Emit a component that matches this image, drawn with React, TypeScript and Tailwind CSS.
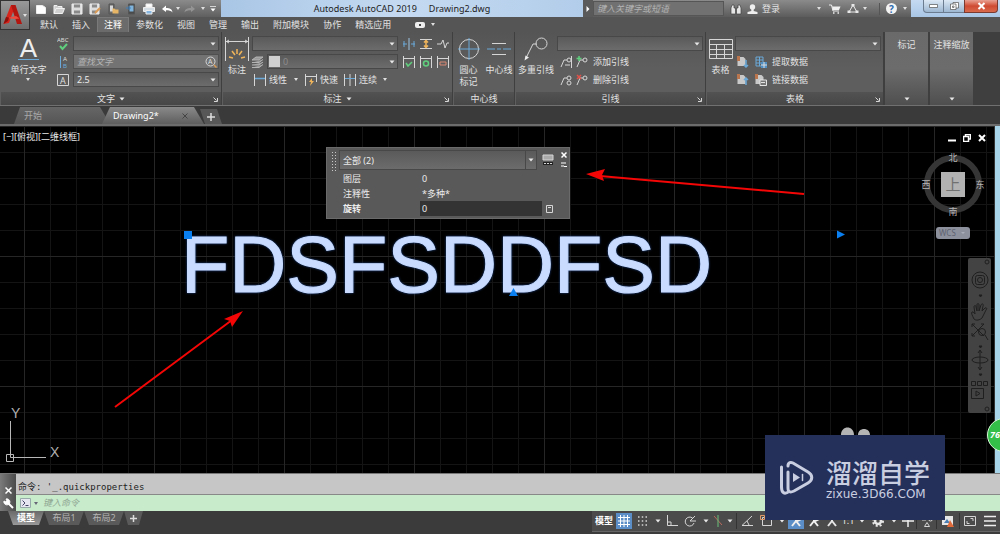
import type { ReactNode } from "react"

interface IcoProps {
  w?: number
  h?: number
  box?: string
  className?: string
  children: ReactNode
}

const Ico = ({ w = 12, h = 12, box, className = "", children }: IcoProps) => (
  <svg
    width={w}
    height={h}
    viewBox={box ?? `0 0 ${w} ${h}`}
    fill="none"
    stroke="#d6d6d6"
    className={`shrink-0 ${className}`}
    aria-hidden="true"
  >
    {children}
  </svg>
)

const Caret = ({ className = "" }: { className?: string }) => (
  <Ico w={6} h={4} className={className}>
    <path d="M0.5 0.5h5L3 3.5z" fill="#e8e8e8" stroke="none" />
  </Ico>
)

const SmallCaret = () => (
  <Ico w={4} h={3}>
    <path d="M0 0h4L2 3z" fill="#e0e0e0" stroke="none" />
  </Ico>
)

const Launcher = () => (
  <button aria-label="对话框" className="absolute right-[3px] top-[5px]">
    <Ico w={5} h={5}>
      <path d="M0.5 0.5l3 3M4.5 1v3.5H1" />
    </Ico>
  </button>
)

// Flat drop-down with its own arrow
const Drop = ({
  label,
  value = "",
  className = "h-[15px]",
}: {
  label: string
  value?: string
  className?: string
}) => (
  <div className={`relative ${className}`}>
    <select
      aria-label={label}
      className="block h-full w-full appearance-none border border-[#484848] bg-linear-to-b from-[#5a5a5a] to-[#6c6c6c] pl-[3px] text-[9px] leading-[13px] text-[#ececec] outline-none"
    >
      <option>{value}</option>
    </select>
    <span className="pointer-events-none absolute inset-y-0 right-[3px] flex items-center">
      <Caret />
    </span>
  </div>
)

const BigButton = ({ icon, children, className = "" }: { icon: ReactNode; children: ReactNode; className?: string }) => (
  <button className={`flex shrink-0 flex-col items-center gap-[3px] pt-[5px] leading-[12px] ${className}`}>
    <span className="flex h-6 items-center">{icon}</span>
    <span>{children}</span>
  </button>
)

const Panel = ({
  title,
  arrow,
  launcher,
  className = "",
  children,
}: {
  title: string
  arrow?: boolean
  launcher?: boolean
  className?: string
  children: ReactNode
}) => (
  <section
    className={`flex shrink-0 flex-col border-r border-[#3f3f3f] bg-linear-to-b from-[#555] via-[#5e5e5e] to-[#5e5e5e] ${className}`}
  >
    <div className="flex h-[60px]">{children}</div>
    <h2 className="relative flex h-[13px] items-center justify-center gap-1 border-l border-[#5e5e5e] bg-linear-to-b from-[#525252] to-[#474747] leading-none">
      {title}
      {arrow && <Caret />}
      {launcher && <Launcher />}
    </h2>
  </section>
)

const SidePanel = ({ title }: { title: string }) => (
  <button className="mr-[2px] flex w-[43px] shrink-0 flex-col items-center justify-between bg-linear-to-b from-[#6a6a6a] via-[#6c6c6c] to-[#4f4f4f] pb-1 pt-[6px] leading-[14px]">
    {title}
    <Caret />
  </button>
)

const quickIcons = [
  {
    name: "新建",
    icon: <path d="M1.5 2.5h6l3 2v6h-9z" fill="#fff" stroke="#eee" />,
  },
  {
    name: "打开",
    icon: <path d="M1 10.5v-8h3l1 1h4v2M1 10.5l2-5h8.500l-2 5z" fill="#d0d0d0" stroke="#f2f2f2" />,
  },
  {
    name: "保存",
    icon: (
      <>
        <path d="M1 1h10v10H1z" fill="#ddd" stroke="#eee" />
        <path d="M3 1.500h6v3H3zM3 7.500h6v3H3z" fill="#8a8a8a" stroke="none" />
      </>
    ),
  },
  {
    name: "另存为",
    icon: (
      <>
        <path d="M1 1h9v10H1z" fill="#ddd" stroke="#eee" />
        <path d="M3 1.500h5v3H3zM3 7.500h4v3H3z" fill="#8a8a8a" stroke="none" />
        <path d="M6 10l5-5" stroke="#d99a55" strokeWidth="2" />
      </>
    ),
  },
  {
    name: "从 Web 打开",
    icon: (
      <>
        <path d="M2 1h5v10H2z" fill="#6b6b6b" stroke="#555" />
        <path d="M3 2.500h3v6H3z" fill="#d8d8d8" stroke="none" />
        <path d="M5.500 10.500v-5h2l1 1h3v4z" fill="#e6b566" stroke="none" />
      </>
    ),
  },
  {
    name: "保存到 Web",
    icon: (
      <>
        <path d="M3.500 1h6v10h-6z" fill="#4a4a4a" stroke="#555" />
        <path d="M4.500 2.500h4v6h-4z" fill="#7fb4dd" stroke="none" />
        <path d="M1 5h4M3.500 3.500L5.500 5l-2 1.500" stroke="#3f7fb8" />
      </>
    ),
  },
  {
    name: "打印",
    icon: (
      <>
        <path d="M3 1h6v3H3z" fill="#fff" stroke="#eee" />
        <path d="M0.500 4.500h11v4H0.500z" fill="#d4dce4" stroke="#eee" />
        <path d="M3 7.500h6v3.500H3z" fill="#86b6e0" stroke="#eee" />
      </>
    ),
  },
  {
    name: "放弃",
    icon: <path d="M1 6l4-3.500V5c4 0 6 1 6.500 4.500C10 7.500 8 7.200 5 7.200V9z" fill="#fff" stroke="none" />,
  },
]

const TitleBar = () => (
  <div className="flex h-[17px]">
    <div className="flex w-[191px] shrink-0 items-center bg-linear-to-b from-[#8b8b8b] to-[#5f5f5f] pl-[2px]">
      {quickIcons.map((q) => (
        <button key={q.name} aria-label={q.name} className="flex w-[18px] justify-center">
          <Ico>{q.icon}</Ico>
        </button>
      ))}
      <button aria-label="放弃列表" className="w-2">
        <SmallCaret />
      </button>
      <button aria-label="重做" className="w-[14px]">
        <Ico>
          <path d="M11 6L7 2.500V5C3 5 1 6 0.500 9.500 2 7.500 4 7.200 7 7.200V9z" fill="#949494" stroke="none" />
        </Ico>
      </button>
      <button aria-label="重做列表" className="w-[10px] pl-[3px]">
        <SmallCaret />
      </button>
      <button aria-label="自定义快速访问工具栏" className="pl-[2px]">
        <Ico w={6} h={6}>
          <path d="M0 0.500h6" />
          <path d="M0.500 2.500h5L3 5.500z" fill="#fff" stroke="none" />
        </Ico>
      </button>
    </div>

    <h1 className="flex min-w-0 flex-1 items-center justify-center gap-3 whitespace-nowrap bg-linear-to-r from-[#a9c6e6] via-[#c5daf1] to-[#b2cdea] font-['Noto_Sans',sans-serif] text-[9px] leading-none text-[#222]">
      <span>Autodesk AutoCAD 2019</span>
      <span>Drawing2.dwg</span>
    </h1>

    <div className="flex w-[328px] shrink-0 items-center bg-linear-to-b from-[#8b8b8b] to-[#5c5c5c] text-[#e4e4e4]">
      <button aria-label="展开搜索" className="flex h-full w-[10px] items-center justify-center bg-[#5a5a5a]">
        <Ico w={4} h={6}>
          <path d="M0.500 0l3 3-3 3z" fill="#fff" stroke="none" />
        </Ico>
      </button>
      <input
        aria-label="搜索"
        placeholder="键入关键字或短语"
        className="h-[15px] w-[131px] border border-[#565656] bg-[#717171] pl-[3px] text-[9px] italic outline-none placeholder:text-[#b4b4b4]"
      />
      <button aria-label="查找" className="ml-[3px] flex w-[18px] justify-center">
        <Ico>
          <path d="M2 2h2v3h1.500v6H1V5zM10 2H8v3H6.500v6H11V5z" fill="#e6e6e6" stroke="#444" strokeWidth="0.700" />
        </Ico>
      </button>
      <button className="flex items-center gap-1 pl-[2px] text-[9px] leading-none">
        <Ico w={11}>
          <circle cx="5.500" cy="4" r="2.700" fill="#eee" stroke="none" />
          <path d="M4.300 6h2.400v2l3.800 1v2H0.500V9l3.800-1z" fill="#eee" stroke="none" />
        </Ico>
        登录
      </button>
      <button aria-label="登录菜单" className="ml-auto">
        <SmallCaret />
      </button>
      <button aria-label="应用商店" className="ml-2">
        <Ico>
          <path d="M0 2h2.500l1.500 6h6" stroke="#f0f0f0" />
          <path d="M3 3.500h8.500L10 7H4z" fill="#f0f0f0" stroke="none" />
          <path d="M4 10h1.500M8.500 10H10" stroke="#f0f0f0" strokeWidth="1.500" />
        </Ico>
      </button>
      <button aria-label="保持连接" className="ml-[6px] flex items-center gap-1">
        <Ico>
          <path d="M6 2L2 9h8z" stroke="#e8e8e8" />
          <path d="M4.500 1h3v2.500h-3zM0.500 7.500h3V10h-3zM8.500 7.500h3V10h-3z" fill="#e8e8e8" stroke="none" />
        </Ico>
        <SmallCaret />
      </button>
      <span className="ml-3 h-3 w-px bg-[#555]" />
      <button aria-label="帮助" className="ml-[6px] mr-1 flex items-center gap-[6px]">
        <span className="flex size-[11px] items-center justify-center rounded-full bg-[#f4f4f4] text-[10px] font-bold leading-none text-[#2d6cb0]">
          ?
        </span>
        <SmallCaret />
      </button>
    </div>

    <div className="flex w-[89px] shrink-0 items-start justify-end bg-linear-to-b from-[#c5daf1] to-[#a9c6e6] pr-[2px]">
      <button
        aria-label="最小化"
        className="flex h-[13px] w-[21px] items-center justify-center rounded-bl-sm border border-t-0 border-[#6b7c90] bg-linear-to-b from-[#dce8f5] to-[#9db7d1]"
      >
        <Ico w={9} h={4}>
          <path d="M0.500 0.500h8v3h-8z" fill="#fff" stroke="#555" strokeWidth="0.700" />
        </Ico>
      </button>
      <button
        aria-label="还原"
        className="flex h-[13px] w-[20px] items-center justify-center border-b border-[#6b7c90] bg-linear-to-b from-[#dce8f5] to-[#9db7d1]"
      >
        <Ico w={9} h={8}>
          <path d="M3 0.500h5.500V6H3z" fill="#fff" stroke="#555" strokeWidth="0.700" />
          <path d="M0.500 2h5.500v5.500H0.500zM2.500 4h1.500v1.500H2.500z" fill="#fff" stroke="#555" strokeWidth="0.700" />
        </Ico>
      </button>
      <button
        aria-label="关闭"
        className="flex h-[13px] w-[34px] items-center justify-center rounded-br-sm border border-t-0 border-[#7a3a30] bg-linear-to-b from-[#e7a092] via-[#cf4a32] to-[#d86a4c]"
      >
        <Ico w={9} h={8}>
          <path d="M1.500 1l6 6M7.500 1l-6 6" stroke="#fff" strokeWidth="2" />
        </Ico>
      </button>
    </div>
  </div>
)

const ribbonTabs = ["默认", "插入", "注释", "参数化", "视图", "管理", "输出", "附加模块", "协作", "精选应用"]

const Header = () => (
  <header className="flex">
    <button
      aria-label="应用程序菜单"
      className="flex h-[30px] w-[30px] shrink-0 items-center border border-[#333] bg-linear-to-b from-[#999] to-[#6f6f6f] pl-[2px]"
    >
      <Ico w={20} h={22}>
        <path d="M8 1h4.500L6 19l-5.500 1z" fill="#d8251c" stroke="none" />
        <path d="M8 1h4.500L19 20h-5z" fill="#b3150f" stroke="none" />
        <path d="M4 14l9-2 3.500 2.500L12 15z" fill="#f04a3c" stroke="none" />
        <path d="M0.500 20L3 13l3 .5L5 17z" fill="#8f0f0b" stroke="none" />
      </Ico>
      <SmallCaret />
    </button>
    <div className="min-w-0 flex-1">
      <TitleBar />
      <nav className="flex h-[15px] items-stretch pl-[3px] leading-[15px]">
        {ribbonTabs.map((tab) => (
          <button
            key={tab}
            className={
              tab === "注释"
                ? "border border-b-0 border-[#7a7a7a] bg-[#6b6b6b] px-[6px] leading-[14px] text-white"
                : "px-[7px]"
            }
          >
            {tab}
          </button>
        ))}
        <button aria-label="功能区显示" className="ml-[17px] flex items-center gap-[6px]">
          <Ico w={10} h={6}>
            <rect width="10" height="6" rx="2" fill="#eee" stroke="none" />
            <rect x="4" y="2" width="2" height="2" fill="#444" stroke="none" />
          </Ico>
          <SmallCaret />
        </button>
      </nav>
    </div>
  </header>
)

const TextPanel = () => (
  <Panel title="文字" arrow launcher className="w-[222px]">
    <BigButton
      className="w-[57px]"
      icon={
        <span className="border-b border-[#6aa9d8] px-[2px] font-['Liberation_Sans',sans-serif] text-[26px] leading-[21px] text-[#eee]">
          A
        </span>
      }
    >
      单行文字
      <span className="flex justify-center pt-[2px]">
        <SmallCaret />
      </span>
    </BigButton>
    <div className="flex flex-1 flex-col gap-[3px] pr-[2px] pt-1">
      <div className="flex items-center">
        <button aria-label="拼写检查" className="w-[16px]">
          <Ico w={13} h={14}>
            <text x="0" y="5" fontSize="6" fill="#ddd" stroke="none">
              ABC
            </text>
            <path d="M3 9l2.500 3L10 7" stroke="#5fce7d" strokeWidth="2" />
          </Ico>
        </button>
        <Drop label="文字样式" className="h-[15px] flex-1" />
      </div>
      <div className="flex items-center">
        <button aria-label="对齐文字" className="w-[16px]">
          <Ico w={13} h={14}>
            <path d="M3.500 1v12" stroke="#6aa9d8" />
            <g fontSize="6" stroke="none" className="font-['Liberation_Sans',sans-serif]">
              <text x="6" y="6" fill="#ddd">A</text>
              <text x="6" y="13" fill="#6aa9d8">B</text>
            </g>
          </Ico>
        </button>
        <div className="flex h-[15px] flex-1 items-center border border-[#505050] bg-[#737373]">
          <input
            aria-label="查找文字"
            placeholder="查找文字"
            className="h-full w-full min-w-0 bg-transparent pl-[3px] italic outline-none placeholder:text-[#b4b4b4]"
          />
          <button aria-label="查找" className="pr-px">
            <Ico>
              <circle cx="5.500" cy="5.500" r="4.500" />
              <text x="3" y="8" fontSize="7" fill="#ddd" stroke="none">
                A
              </text>
              <path d="M9 9l2.500 2.500" stroke="#d99a55" strokeWidth="1.500" />
            </Ico>
          </button>
        </div>
      </div>
      <div className="flex items-center">
        <button aria-label="文字高度" className="w-[16px]">
          <Ico>
            <path d="M0.500 0.500h11v11H0.500z" />
            <text x="3" y="9.500" fontSize="9" fill="#ddd" stroke="none">
              A
            </text>
          </Ico>
        </button>
        <Drop label="高度" value="2.5" className="h-[15px] flex-1" />
      </div>
    </div>
  </Panel>
)

const DimPanel = () => (
  <Panel title="标注" arrow launcher className="w-[231px]">
    <BigButton
      className="w-[30px]"
      icon={
        <Ico w={24} h={24}>
          <path d="M0.500 0v24M23.500 0v24M1 4.500h22M4 3L1.500 4.500 4 6M20 3l2.500 1.500L20 6" />
          <path d="M12 12v5M7 14l3 4M17 14l-3 4M4 20l4 1M20 20l-4 1" stroke="#efb45a" strokeWidth="1.500" />
        </Ico>
      }
    >
      标注
    </BigButton>
    <div className="flex flex-1 flex-col gap-[3px] pt-1">
      <div className="flex items-center gap-[5px]">
        <Drop label="标注样式" className="h-[15px] w-[146px]" />
        <button aria-label="打断">
          <Ico>
            <path d="M0 6h4M8 6h4M1 3v6M11 3v6" stroke="#6aa9d8" />
            <path d="M6 0v12" stroke="#9cc4e4" />
          </Ico>
        </button>
        <button aria-label="调整间距">
          <Ico>
            <path d="M0 1.500h12M0 10.500h12" />
            <path d="M6 2v8M4 4.500L6 2.500l2 2M4 7.500L6 9.500l2-2" stroke="#efb45a" strokeWidth="1.500" />
          </Ico>
        </button>
        <button aria-label="折弯标注">
          <Ico>
            <path d="M0 6h4l2-4 2 8 2-5h2" />
          </Ico>
        </button>
      </div>
      <div className="flex items-center gap-[5px]">
        <span className="flex w-[146px] items-center gap-[3px]">
          <Ico>
            <path d="M4 1h7L7 4H0zM0 6.500h7l4-3M0 9h7l4-3M0 11.500h7l4-3" fill="#9a9a9a" stroke="#b4b4b4" />
          </Ico>
          <span className="relative flex-1">
            <Drop label="图层" />
            <span className="pointer-events-none absolute left-[2px] top-[2px] size-[11px] bg-[#d0d0d0]" />
            <span className="pointer-events-none absolute left-[16px] top-[2px] leading-[11px] text-[#8c8c8c]">0</span>
          </span>
        </span>
        <button aria-label="检验">
          <Ico>
            <path d="M0.500 0v12M11.500 0v12M1 2.500h10" />
            <path d="M3 7l2 3 4-4" stroke="#5fce7d" strokeWidth="1.500" />
          </Ico>
        </button>
        <button aria-label="更新">
          <Ico>
            <path d="M0.500 0v12M11.500 0v12M1 2.500h10" />
            <circle cx="6" cy="7.500" r="2.500" stroke="#5fce7d" strokeWidth="1.500" />
          </Ico>
        </button>
        <button aria-label="重新关联">
          <Ico>
            <path d="M0.500 0v12M11.500 0v12M1 2.500h10" />
            <path d="M3 6h6v3H3z" stroke="#d98872" />
          </Ico>
        </button>
      </div>
      <div className="flex h-[15px] items-center pl-[2px]">
        <button className="flex items-center gap-[3px]">
          <Ico>
            <path d="M0.500 0v12M11.500 0v12" />
            <path d="M1 4.500h10" stroke="#6aa9d8" strokeWidth="1.500" />
          </Ico>
          线性
        </button>
        <span className="px-[7px]">
          <SmallCaret />
        </span>
        <button className="flex items-center gap-[3px]">
          <Ico>
            <path d="M0.500 0v12M11.500 0v8M1 2.500h10" />
            <path d="M7 4L4 8h2l-1 4 4-5H7z" fill="#efb45a" stroke="none" />
          </Ico>
          快速
        </button>
        <button className="ml-[6px] flex items-center gap-[3px]">
          <Ico>
            <path d="M0.500 0v12M6 0v12M11.500 0v12" />
            <path d="M1 4.500h10" stroke="#6aa9d8" />
          </Ico>
          连续
        </button>
        <span className="px-[6px]">
          <SmallCaret />
        </span>
      </div>
    </div>
  </Panel>
)

const LeaderMini = ({ children }: { children?: ReactNode }) => (
  <Ico>
    <path d="M1 11l3-7h3" />
    <circle cx="9" cy="4" r="2" />
    {children}
  </Ico>
)

const SheetMini = ({ children }: { children?: ReactNode }) => (
  <Ico>
    <path d="M0.500 1h6l2 2v7h-8z" fill="#c9c9c9" stroke="none" />
    <path d="M0 0h3v5H0z" fill="#b8754e" stroke="none" />
    {children}
  </Ico>
)

const Ribbon = () => (
  <div className="flex h-[74px] border-b border-[#707070] bg-[#3f3f3f]">
    <TextPanel />
    <DimPanel />
    <Panel title="中心线" className="w-[62px]">
      <BigButton
        className="w-[31px]"
        icon={
          <Ico w={22} h={22}>
            <circle cx="11" cy="11" r="9.500" />
            <path d="M11 0v22M0 11h22" stroke="#6aa9d8" />
          </Ico>
        }
      >
        圆心
        <br />
        标记
      </BigButton>
      <BigButton
        className="w-[30px]"
        icon={
          <Ico w={24} h={22}>
            <path d="M5 5.500h14M5 16.500h14" />
            <path d="M0 11h8M10 11h4M16 11h8" stroke="#6aa9d8" />
          </Ico>
        }
      >
        中心线
      </BigButton>
    </Panel>

    <Panel title="引线" launcher className="w-[191px]">
      <BigButton
        className="w-[42px]"
        icon={
          <Ico w={24} h={24}>
            <path d="M2 21L9 7h4" />
            <circle cx="17.500" cy="6.500" r="5.500" />
            <path d="M0.500 23.500l1-5 3.500 2z" fill="#eee" stroke="none" />
          </Ico>
        }
      >
        多重引线
      </BigButton>
      <div className="flex flex-1 flex-col gap-[3px] pr-[2px] pt-1">
        <Drop label="多重引线样式" />
        <div className="flex h-[15px] items-center gap-1 pl-[3px]">
          <button aria-label="对齐">
            <LeaderMini>
              <path d="M11.500 0v12M5 9h5" />
            </LeaderMini>
          </button>
          <button className="flex items-center gap-[5px]">
            <LeaderMini>
              <path d="M3 0v5M0.500 2.500h5" stroke="#5fce7d" strokeWidth="1.500" />
            </LeaderMini>
            添加引线
          </button>
        </div>
        <div className="flex h-[15px] items-center gap-1 pl-[3px]">
          <button aria-label="合并">
            <LeaderMini>
              <circle cx="9" cy="9" r="2" />
            </LeaderMini>
          </button>
          <button className="flex items-center gap-[5px]">
            <LeaderMini>
              <path d="M1 1l4 4M5 1L1 5" stroke="#e0524a" strokeWidth="1.500" />
            </LeaderMini>
            删除引线
          </button>
        </div>
      </div>
    </Panel>

    <Panel title="表格" launcher className="w-[178px]">
      <BigButton
        className="w-[29px]"
        icon={
          <Ico w={24} h={20}>
            <path d="M0.500 0.500h23v19H0.500zM1 5.500h22M1 10.500h22M1 15.500h22M7.500 5.500V19M15.500 5.500V19" />
          </Ico>
        }
      >
        表格
      </BigButton>
      <div className="flex flex-1 flex-col gap-[3px] pr-[2px] pt-1">
        <Drop label="表格样式" />
        <div className="flex h-[15px] items-center gap-[6px] pl-[2px]">
          <button aria-label="从源下载">
            <SheetMini>
              <path d="M9 4v7M7 9l2 2 2-2" stroke="#6aa9d8" strokeWidth="1.500" />
            </SheetMini>
          </button>
          <button className="flex items-center gap-[5px]">
            <Ico>
              <path d="M1 1h7v9H1zM1 4h7M1 7h7M4.500 1v9" stroke="#6aa9d8" />
              <path d="M6 6h6v6H6z" fill="#4f8fc4" stroke="none" />
              <path d="M6 9h6M9 6v6" stroke="#ddd" />
            </Ico>
            提取数据
          </button>
        </div>
        <div className="flex h-[15px] items-center gap-[6px] pl-[2px]">
          <button aria-label="上载到源">
            <SheetMini>
              <path d="M9 11V4M7 6l2-2 2 2" stroke="#6aa9d8" strokeWidth="1.500" />
            </SheetMini>
          </button>
          <button className="flex items-center gap-[5px]">
            <SheetMini>
              <path d="M5 6h6.500v5.500H5zM6 8.500h4" fill="#777" stroke="#e4e4e4" />
            </SheetMini>
            链接数据
          </button>
        </div>
      </div>
    </Panel>

    <div className="ml-px flex">
      <SidePanel title="标记" />
      <SidePanel title="注释缩放" />
    </div>
  </div>
)

const FileTabs = () => (
  <div className="flex h-5 items-end border-b-2 border-[#6c6c6c] bg-[#3a3a3a] pl-[14px] leading-[16px]">
    <button className="h-[17px] w-[96px] bg-linear-to-b from-[#666] to-[#555] pl-[10px] text-left text-[#a8a8a8] [clip-path:polygon(6px_0,86px_0,100%_100%,0_100%)]">
      开始
    </button>
    <div className="-ml-2 flex h-[17px] w-[102px] items-center justify-between bg-linear-to-b from-[#8a8a8a] to-[#5e5e5e] pl-[11px] pr-4 text-white [clip-path:polygon(8px_0,92px_0,100%_100%,0_100%)]">
      <button className="leading-none">Drawing2*</button>
      <button aria-label="关闭 Drawing2">
        <Ico w={6} h={6}>
          <path d="M0.500 0.500l5 5M5.500 0.500l-5 5" stroke="#444" />
        </Ico>
      </button>
    </div>
    <button
      aria-label="新图形"
      className="-ml-1 flex h-[15px] w-[22px] items-center justify-center bg-[#575757] [clip-path:polygon(0_0,17px_0,100%_100%,5px_100%)]"
    >
      <Ico w={8} h={8}>
        <path d="M4 0v8M0 4h8" stroke="#ddd" strokeWidth="1.500" />
      </Ico>
    </button>
  </div>
)

// Grid, selected text with its grips, and the two markup arrows
const Drawing = () => (
  <svg className="absolute inset-0 h-full w-full" fill="none">
    <defs>
      <pattern id="grid" x="24" y="0" width="130" height="130" patternUnits="userSpaceOnUse">
        <path
          d="M26.500 0v130M52.500 0v130M78.500 0v130M104.500 0v130M0 26.500h130M0 52.500h130M0 78.500h130M0 104.500h130"
          stroke="#141414"
        />
        <path d="M0.500 0v130M0 0.500h130" stroke="#262626" />
      </pattern>
    </defs>
    <rect width="100%" height="100%" fill="url(#grid)" />
    <text
      x="181"
      y="166"
      fontSize="79"
      fill="#c9dcff"
      stroke="#c9dcff"
      className="font-['Liberation_Sans',sans-serif] drop-shadow-[0_0_1px_#1f4488]"
    >
      FDSFSDDFSD
    </text>
    <g fill="#0a80f0">
      <path d="M184 105h8v8h-8z" />
      <path d="M513.500 162l4.500 8h-9z" />
      <path d="M837 104.500l8 4-8 4z" />
    </g>
    <g stroke="#f40606" strokeWidth="2" fill="#f40606">
      <path d="M804 68L600 50M115 281L232 194" />
      <path d="M586 48l19-5-3 6 2 6z" strokeWidth="0" />
      <path d="M243 185l-11 16-2-6-6-2z" strokeWidth="0" />
    </g>
  </svg>
)

const properties = [
  { name: "图层", value: "0" },
  { name: "注释性", value: "*多种*" },
]

const QuickProperties = () => (
  <div className="absolute left-[326px] top-[21px] flex h-[72px] w-[244px] border border-[#6a6a6a] bg-[#595959] pl-1 text-[#ececec]">
    <div className="mt-[3px] h-5 w-[6px] shrink-0 bg-[radial-gradient(#c8c8c8_30%,transparent_40%)] bg-[length:3px_3px]" />
    <div className="ml-[2px] flex-1 pt-[2px]">
      <div className="flex items-center gap-[5px]">
        <div className="relative">
          <Drop label="对象类型" value="全部 (2)" className="h-[20px] w-[198px]" />
          <span className="pointer-events-none absolute inset-y-px right-[11px] w-px bg-[#484848]" />
        </div>
        <button aria-label="自定义">
          <Ico>
            <path d="M1 1h10v5H1z" fill="#aaa" />
            <path d="M1 8h10v3H1z" fill="#222" stroke="none" />
            <path d="M2 9.500h2M5 9.500h2M8 9.500h2" />
          </Ico>
        </button>
      </div>
      <dl className="pt-px leading-[15px]">
        {properties.map((p) => (
          <div key={p.name} className="flex h-[15px] pl-1">
            <dt className="w-[79px]">{p.name}</dt>
            <dd>{p.value}</dd>
          </div>
        ))}
      </dl>
      <div className="flex items-center pl-1">
        <label htmlFor="rotation" className="w-[77px] font-bold">
          旋转
        </label>
        <input
          id="rotation"
          defaultValue="0"
          className="h-[15px] w-[122px] bg-[#333] pl-[2px] outline-none"
        />
        <button aria-label="计算器" className="ml-1">
          <Ico w={7} h={8}>
            <path d="M0.500 0.500h6v7h-6zM2 2.500h3" />
          </Ico>
        </button>
      </div>
    </div>
    <div className="flex w-[10px] flex-col items-center gap-1 pt-1">
      <button aria-label="关闭特性">
        <Ico w={6} h={6}>
          <path d="M0.500 0.500l5 5M5.500 0.500l-5 5" stroke="#fff" strokeWidth="1.500" />
        </Ico>
      </button>
      <button aria-label="选项">
        <Ico w={6} h={6}>
          <path d="M0 1h5M0 4h3M3 4.500h3" stroke="#fff" />
        </Ico>
      </button>
    </div>
  </div>
)

const ViewCube = () => (
  <svg width="70" height="92" className="absolute right-[6px] top-[22px]" fill="none">
    <circle cx="35" cy="36" r="26" stroke="#353535" strokeWidth="6" />
    <path d="M23 24h24v25H23z" fill="#b2b2b2" />
    <text x="35" y="42" fontSize="15" fill="#707070" textAnchor="middle">上</text>
    <g fill="#b4b4b4" fontSize="9" textAnchor="middle">
      <text x="35" y="13">北</text>
      <text x="35" y="67">南</text>
      <text x="8" y="40">西</text>
      <text x="62" y="40">东</text>
    </g>
    <rect x="18" y="79" width="34" height="12" rx="3" fill="#8d919e" />
    <text x="21" y="88" fontSize="8" fill="#5f6370">WCS</text>
    <path d="M43 84h4l-2 2z" fill="#a9adb8" />
  </svg>
)

const NavBar = () => (
  <svg width="23" height="155" className="absolute right-[3px] top-[132px]" fill="none" stroke="#1f1f1f">
    <rect width="23" height="155" rx="2" fill="#434343" stroke="none" />
    <circle cx="19" cy="4" r="2" />
    <circle cx="12" cy="22" r="8" />
    <rect x="7.500" y="17.500" width="9" height="9" rx="2" />
    <circle cx="12" cy="22" r="2.500" />
    <path d="M11 37h3l-1.500 2z" fill="#1f1f1f" />
    <path d="M6 61c-2-4-3-6-2-7s3 2 3 2l-1-7c0-2 2-2 2 0l1 4v-6c0-2 2-2 2 0v6l2-6c1-2 3-1 2 1l-1 5 3-3c2-1 2 1 1 2l-4 8c-2 2-6 3-8 1z" />
    <path d="M4 66l12 12M16 66L4 78M4 66v3M4 66h3M16 66h-3M4 78v-3M4 78h3" />
    <circle cx="14" cy="74" r="3.500" />
    <path d="M17 77l3 5M11 88h3l-1.500 2z" fill="#1f1f1f" />
    <ellipse cx="12" cy="102" rx="8" ry="3" />
    <path d="M12 93v18M10 95l2-3 2 3M10 109l2 3 2-3" />
    <path d="M11 116h3l-1.500 2z" fill="#1f1f1f" />
    <path d="M3.500 123.500h4v4h-4zM9.500 123.500h4v4h-4zM15.500 123.500h4v4h-4zM3.500 130.500h12v10h-12zM8 133v5l4-2.500z" />
    <circle cx="19" cy="151" r="2" />
  </svg>
)

const Canvas = () => (
  <main className="flex min-h-[347px] flex-1 bg-black">
    <div className="relative min-w-0 flex-1 overflow-hidden text-[#e8e8e8]">
      <Drawing />
      <div className="absolute left-[3px] top-[5px] leading-[12px]">[−][俯视][二维线框]</div>
      <QuickProperties />
      <div className="absolute right-2 top-2 flex items-center gap-[7px]">
        <button aria-label="最小化视口">
          <Ico w={8} h={8}>
            <path d="M0 6.500h8" stroke="#fff" strokeWidth="2" />
          </Ico>
        </button>
        <button aria-label="还原视口">
          <Ico w={8} h={8}>
            <path d="M2.500 2V0.500h5V5H6M0.500 2.500h5v5h-5z" stroke="#fff" strokeWidth="1.500" />
          </Ico>
        </button>
        <button aria-label="关闭视口">
          <Ico w={8} h={8}>
            <path d="M1 1l6 6M7 1L1 7" stroke="#fff" strokeWidth="2" />
          </Ico>
        </button>
      </div>
      <ViewCube />
      <NavBar />
      <svg width="64" height="64" className="absolute bottom-[4px] left-0" fill="none" stroke="#b8b8b8">
        <path d="M10.500 52.500V16M10.500 52.500H46M6.500 49.500h7v7h-7z" />
        <g fill="#b0b0b0" stroke="none" fontSize="14" className="font-['Liberation_Sans',sans-serif]">
          <text x="11" y="13">Y</text>
          <text x="50" y="52">X</text>
        </g>
      </svg>
    </div>
    <div className="relative w-[6px] border-l border-[#333] bg-[#a8d4ea]">
      <span className="absolute -left-[8px] bottom-[21px] flex size-[34px] items-center rounded-full border border-[#d6f5d6] bg-[#34bf49] pl-[2px] text-[9px] font-bold italic text-white">
        76
      </span>
    </div>
  </main>
)

const CommandLine = () => (
  <div className="flex h-[38px] border-t border-[#777]">
    <div className="flex w-4 shrink-0 flex-col items-center justify-between bg-linear-to-r from-[#7b7b7b] to-[#4b4b4b] pb-[2px] pt-1">
      <span className="h-1 w-3 bg-[radial-gradient(#aaa_30%,transparent_40%)] bg-[length:2px_2px]" />
      <button aria-label="关闭命令行">
        <Ico w={7} h={7}>
          <path d="M0.500 0.500l6 6M6.500 0.500l-6 6" stroke="#fff" strokeWidth="1.500" />
        </Ico>
      </button>
      <button aria-label="命令行设置">
        <Ico w={11} h={11}>
          <path d="M4 4l6 6" stroke="#fff" strokeWidth="2" />
          <path d="M1 3l2 1 1-1-1-2a3 3 0 1 1-2 2z" fill="#fff" stroke="#fff" />
        </Ico>
      </button>
    </div>
    <div className="flex min-w-0 flex-1 flex-col">
      <div className="flex h-[21px] items-end border-b border-[#888] bg-[#c6c6c6] pl-[2px] font-['DejaVu_Sans_Mono','Noto_Sans_CJK_SC',monospace] text-[9px] leading-[14px] text-[#222]">
        命令: '_.quickproperties
      </div>
      <div className="flex flex-1 items-center gap-[5px] bg-[#c8ebcb] pl-1">
        <button aria-label="最近使用的命令" className="flex items-center gap-[3px]">
          <Ico w={11} h={10}>
            <path d="M0.500 0.500h10v9h-10z" fill="#e6e6f0" stroke="#9aa" />
            <path d="M2.500 2.500l2.500 2.500-2.500 2.500M5.500 7.500h3" stroke="#446" />
          </Ico>
          <Ico w={4} h={3}>
            <path d="M0 0h4L2 3z" fill="#667" stroke="none" />
          </Ico>
        </button>
        <input
          aria-label="命令"
          placeholder="键入命令"
          className="min-w-0 flex-1 bg-transparent italic text-[#333] outline-none placeholder:text-[#8fa592]"
        />
      </div>
    </div>
  </div>
)

const person = <path d="M6 1v5M6 6L2 11M6 6l4 5M7 6l4-2" stroke="#f0f0f0" strokeWidth="2" />

const statusItems = [
  { name: "栅格", style: "w-4 bg-[#5b8ec6]", icon: <path d="M0 2.500h12M0 6h12M0 9.500h12M2.500 0v12M6 0v12M9.500 0v12" stroke="#fff" /> },
  { name: "捕捉", style: "w-5", icon: <path d="M2 2h9M2 6h9M2 10h9" strokeDasharray="1.500 2.250" strokeWidth="1.500" /> },
  { name: "捕捉菜单", style: "w-3", caret: true },
  { name: "正交", style: "w-4", icon: <path d="M1.500 0v10.500H12M1.500 7H5v3" /> },
  { name: "极轴", style: "w-5", icon: <path d="M6 6l5-5M6 6h6M10 8a4.500 4.500 0 1 1-1.500-5" /> },
  { name: "极轴菜单", style: "w-3", caret: true },
  {
    name: "等轴测",
    style: "w-3",
    icon: (
      <>
        <path d="M2 1l8 9" stroke="#b96a5c" />
        <path d="M6 0v12" stroke="#6bbf7b" />
      </>
    ),
  },
  { name: "等轴测菜单", style: "w-3", caret: true },
  { name: "追踪", style: "w-5 border-l border-[#333]", icon: <path d="M11 1L1 10.500h11M6 6l2 4" /> },
  {
    name: "对象捕捉",
    style: "w-5",
    icon: (
      <>
        <path d="M2.500 2.500h9v8h-9z" />
        <path d="M0.500 0.500h4v4h-4z" stroke="#e09a6a" />
      </>
    ),
  },
  { name: "对象捕捉菜单", style: "w-3", caret: true },
  { name: "注释可见性", style: "w-4 bg-[#5b8ec6]", icon: person },
  { name: "自动缩放", style: "w-5", icon: person },
  { name: "注释比例", style: "w-4", icon: <path d="M6 1v5M6 6L2 11M6 6l4 5" stroke="#e6e6e6" strokeWidth="2" /> },
]

const StatusButton = ({ item }: { item: { name: string; style: string; icon?: ReactNode; caret?: boolean } }) => (
  <button aria-label={item.name} className={`flex h-4 shrink-0 items-center justify-center ${item.style}`}>
    {item.caret ? <Caret /> : <Ico>{item.icon}</Ico>}
  </button>
)

const moreStatusItems = [
  { name: "比例菜单", style: "w-3", caret: true },
  {
    name: "工作空间",
    style: "w-5",
    icon: (
      <>
        <circle cx="6" cy="6" r="3" stroke="#e6e6e6" strokeWidth="2.500" />
        <circle cx="6" cy="6" r="5" stroke="#e6e6e6" strokeWidth="2" strokeDasharray="2 2" />
      </>
    ),
  },
  { name: "工作空间菜单", style: "w-3", caret: true },
  { name: "监视器", style: "w-4", icon: <path d="M6 0v12M0 6h12" strokeWidth="1.500" stroke="#eee" /> },
  {
    name: "隔离对象",
    style: "w-5 border-l border-[#333]",
    icon: (
      <>
        <path d="M1 1h4v4H1zM6 7.500l2.500 4h-5z" />
        <circle cx="9.500" cy="4" r="2" />
      </>
    ),
  },
  {
    name: "图形性能",
    style: "w-6 border-x border-[#333]",
    icon: (
      <>
        <path d="M0 1h11v9H0z" fill="#e6e6e6" stroke="none" />
        <path d="M2 8l3-4 3 4z" fill="#4a7fb5" stroke="none" />
        <path d="M8 5l4 7H5z" fill="#e0693a" stroke="none" />
      </>
    ),
  },
  { name: "全屏显示", style: "w-5", icon: <path d="M0.500 1.500h11v9H0.500zM3 8.500V6M3 8.500h2.500M9 3.500V6M9 3.500H6.500" /> },
  { name: "自定义", style: "w-5", icon: <path d="M0 1.500h12M0 6h12M0 10.500h12" stroke="#eee" strokeWidth="1.500" /> },
]

const layoutTabs = ["布局1", "布局2"]

const StatusBar = () => (
  <footer className="flex h-[23px] items-start justify-between bg-[#3b3b3b] leading-[14px]">
    <div className="flex pl-2">
      <button className="h-[14px] w-[36px] bg-linear-to-b from-[#6a6a6a] to-[#999] font-bold text-white [clip-path:polygon(0_0,100%_0,31px_100%,5px_100%)]">
        模型
      </button>
      {layoutTabs.map((tab) => (
        <button
          key={tab}
          className="h-[14px] w-[40px] bg-[#5a5a5a] text-[#b4b4b4] [clip-path:polygon(0_0,100%_0,35px_100%,5px_100%)]"
        >
          {tab}
        </button>
      ))}
      <button
        aria-label="新建布局"
        className="flex h-[14px] w-[19px] items-center justify-center bg-[#5a5a5a] [clip-path:polygon(0_0,100%_0,15px_100%,4px_100%)]"
      >
        <Ico w={7} h={7}>
          <path d="M3.500 0v7M0 3.500h7" stroke="#ddd" strokeWidth="1.500" />
        </Ico>
      </button>
    </div>
    <div className="flex h-[21px] items-center border-b border-[#666] bg-[#4b4b4b]">
      <button className="w-6 font-bold text-white">模型</button>
      {statusItems.map((item) => (
        <StatusButton key={item.name} item={item} />
      ))}
      <button className="w-4 text-[#eee]">1:1</button>
      {moreStatusItems.map((item) => (
        <StatusButton key={item.name} item={item} />
      ))}
    </div>
  </footer>
)

const Watermark = () => (
  <div className="absolute bottom-[14px] right-[55px] flex h-[85px] w-[180px] items-center gap-[11px] bg-[#25305a] pl-[14px] text-[#c9cee0]">
    <svg width="38" height="8" className="absolute -top-[8px] left-[74px]" fill="#b4b4b4">
      <path d="M2 8c0-10 13-10 13 0zM19 8c0-8 12-8 12 0z" />
    </svg>
    <svg width="36" height="36" fill="none" stroke="#c9cee0" strokeWidth="3" strokeLinecap="round" className="shrink-0">
      <path d="M2.500 7v20c0 6 3 7 6 5.500" />
      <path d="M9 6c0-4 3-4 5-3l15 9c5 3 5 8 0 11l-14 8c-4 2-6 1-6-3V12" />
      <path d="M14 13l7 4.500-7 4.500z" fill="#c9cee0" stroke="none" />
      <path d="M23.500 14.500v6" strokeWidth="1.500" />
    </svg>
    <div>
      <div className="font-['Noto_Sans_CJK_SC',sans-serif] text-[26px] font-medium leading-[32px]">溜溜自学</div>
      <div className="font-['DejaVu_Sans',sans-serif] text-[12px] leading-[12px]">zixue.3D66.COM</div>
    </div>
  </div>
)

export default function App() {
  return (
    <div className="relative flex min-h-screen flex-col overflow-hidden bg-[#555] font-['Noto_Sans','Noto_Sans_CJK_SC',sans-serif] text-[9px] text-[#e2e2e2]">
      <Header />
      <Ribbon />
      <FileTabs />
      <Canvas />
      <CommandLine />
      <StatusBar />
      <Watermark />
    </div>
  )
}
